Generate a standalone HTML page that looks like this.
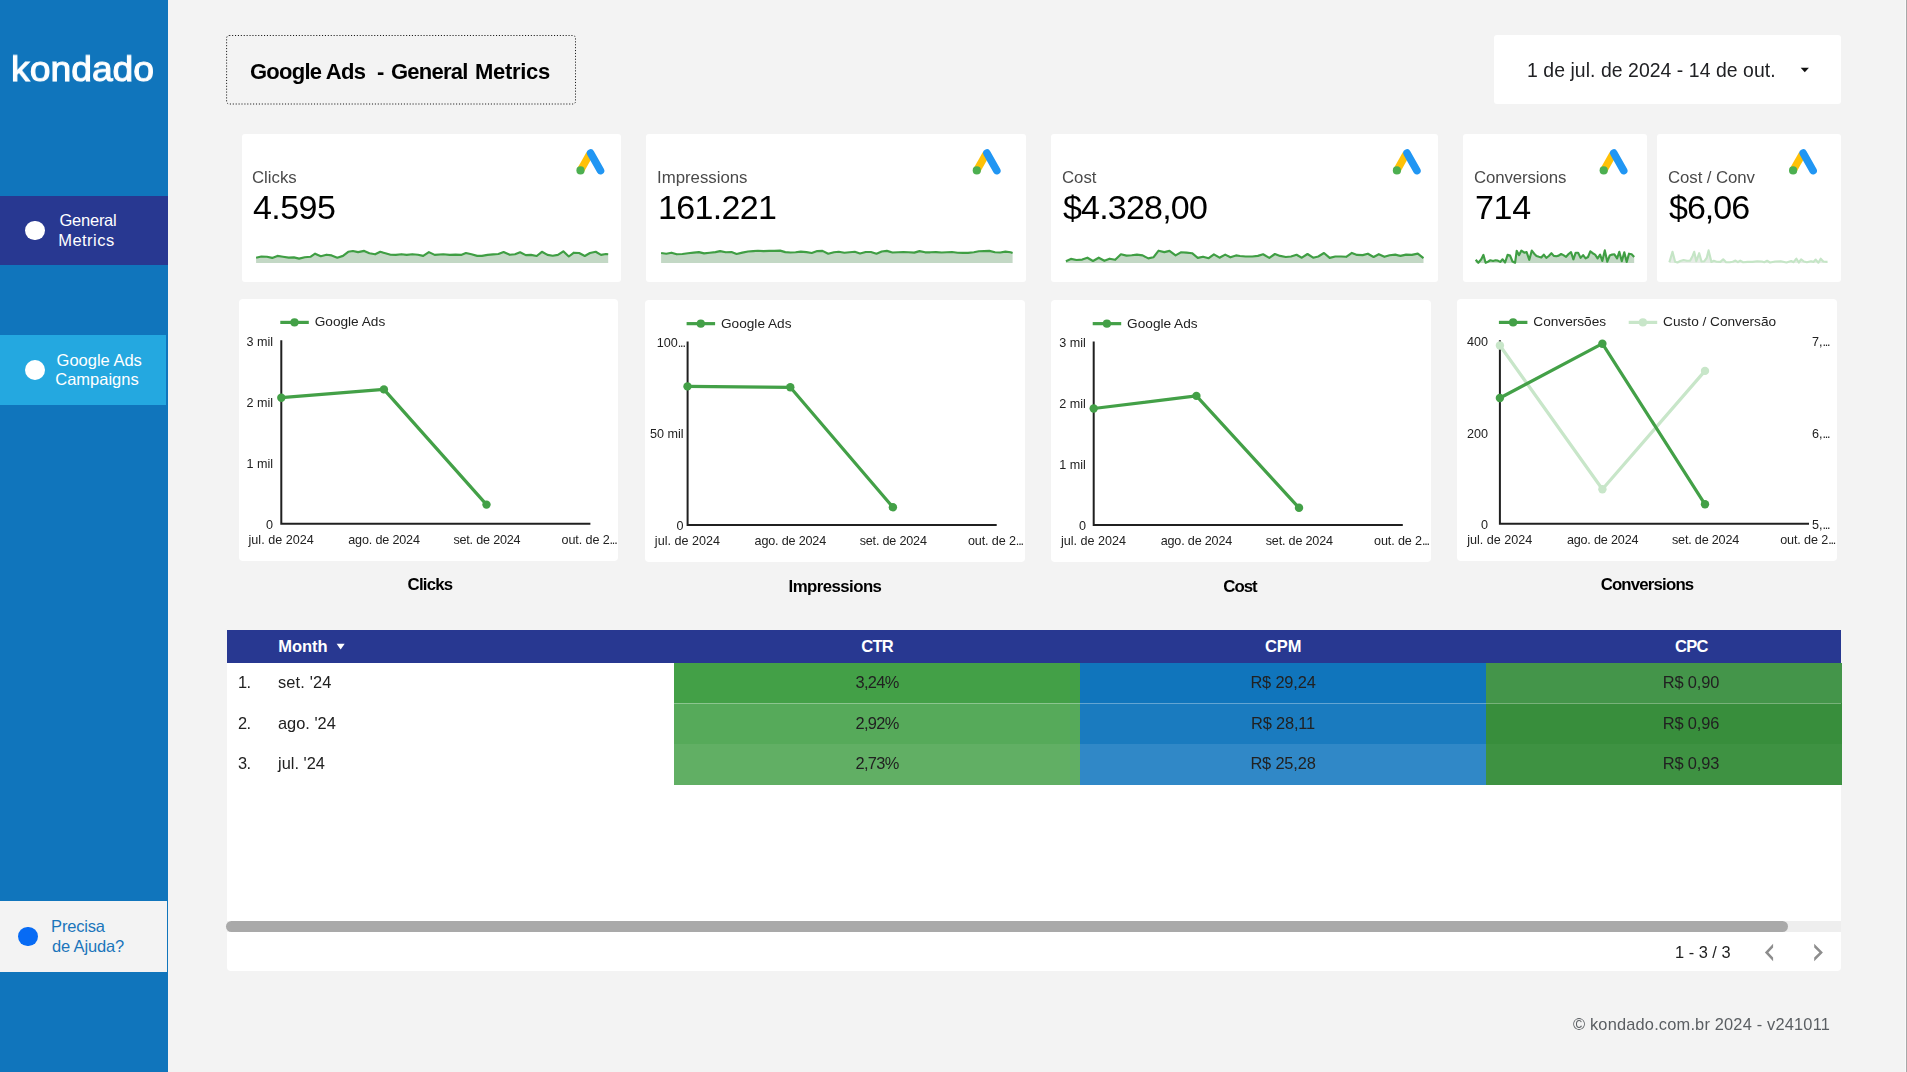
<!DOCTYPE html>
<html lang="pt-BR">
<head>
<meta charset="utf-8">
<title>Google Ads - General Metrics</title>
<style>
*{box-sizing:border-box;margin:0;padding:0}
html,body{width:1907px;height:1072px;overflow:hidden;background:#f3f3f3;font-family:"Liberation Sans",sans-serif;color:#000}
.abs{position:absolute}
.t{position:absolute;white-space:nowrap;line-height:1}
#side{left:0;top:0;width:167.5px;height:1072px;background:#1075bc}
#redge{left:1905px;top:0;width:2px;height:1072px;background:linear-gradient(90deg,#f9f9f9 0,#f9f9f9 50%,#a8a8a8 50%)}
.nav{position:absolute;left:0;width:167.5px}
.dot{position:absolute;border-radius:50%;width:19.8px;height:19.8px}
.card{position:absolute;background:#fff;border-radius:3px}
svg{position:absolute;left:0;top:0;overflow:visible;will-change:transform}
.g{will-change:transform}
svg text{font-family:"Liberation Sans",sans-serif}
.cell{position:absolute}
</style>
</head>
<body>
<aside id="side" class="abs"></aside>
<div id="redge" class="abs"></div>
<div id="logo" class="t g" style="top:50.33px;font-size:37.3px;color:#fff;left:10.80px;-webkit-text-stroke:1.1px #fff;transform:scaleY(.95);transform-origin:0 84.65%;">kondado</div>
<nav>
<div class="nav" style="top:195.8px;height:69.4px;background:#283891"></div>
<div class="dot" style="left:25px;top:220.5px;background:#fff"></div>
<div id="nav1a" class="t" style="top:211.63px;font-size:16.5px;color:#fff;letter-spacing:-0.250px;left:-112.00px;width:400px;text-align:center;">General</div>
<div id="nav1b" class="t" style="top:231.63px;font-size:16.5px;color:#fff;letter-spacing:0.470px;left:-113.60px;width:400px;text-align:center;">Metrics</div>
<div class="nav" style="top:335px;height:69.6px;width:166.3px;background:#24a8e0"></div>
<div class="dot" style="left:25px;top:359.9px;background:#fff"></div>
<div id="nav2a" class="t" style="top:351.63px;font-size:16.5px;color:#fff;left:-100.80px;width:400px;text-align:center;">Google Ads</div>
<div id="nav2b" class="t" style="top:370.93px;font-size:16.5px;color:#fff;left:-103.00px;width:400px;text-align:center;">Campaigns</div>
<div class="nav" style="top:901.3px;height:70.4px;width:167.4px;background:#f3f3f3"></div>
<div class="dot" style="left:18px;top:926.6px;background:#076bf4"></div>
<div id="nav3a" class="t" style="top:917.73px;font-size:16.5px;color:#1a75bb;letter-spacing:-0.200px;left:51.10px;">Precisa</div>
<div id="nav3b" class="t" style="top:937.63px;font-size:16.5px;color:#1a75bb;letter-spacing:-0.130px;left:51.90px;">de Ajuda?</div>
</nav>
<main>
<div role="heading" aria-level="1">
<div id="ttl1" class="t g" style="top:61.38px;font-size:22px;color:#000;font-weight:bold;letter-spacing:-0.750px;left:250.40px;">Google Ads</div>
<div id="ttl2" class="t g" style="top:61.38px;font-size:22px;color:#000;font-weight:bold;left:377.20px;">-</div>
<div id="ttl3" class="t g" style="top:61.38px;font-size:22px;color:#000;font-weight:bold;letter-spacing:-0.760px;left:391.20px;">General</div>
<div id="ttl4" class="t g" style="top:61.38px;font-size:22px;color:#000;font-weight:bold;letter-spacing:-0.300px;left:474.60px;">Metrics</div>
</div>
<div class="card" style="left:1493.5px;top:35.1px;width:347.4px;height:69.3px"></div>
<div id="date" class="t g" style="top:61.38px;font-size:19.4px;color:#202124;letter-spacing:0.060px;left:1527.00px;">1 de jul. de 2024 - 14 de out.</div>
<section class="card" style="left:241.5px;top:134px;width:379.5px;height:147.8px"></section>
<div id="c1l" class="t g" style="top:169.78px;font-size:16.8px;color:#4a4a4a;left:252.40px;">Clicks</div>
<div id="c1v" class="t g" style="top:189.92px;font-size:34px;color:#000;letter-spacing:-0.550px;left:253.10px;">4.595</div>
<section class="card" style="left:646.4px;top:134px;width:379.5px;height:147.8px"></section>
<div id="c2l" class="t g" style="top:169.78px;font-size:16.8px;color:#4a4a4a;left:657.20px;">Impressions</div>
<div id="c2v" class="t g" style="top:189.92px;font-size:34px;color:#000;letter-spacing:-0.650px;left:657.70px;">161.221</div>
<section class="card" style="left:1051.0px;top:134px;width:386.8px;height:147.8px"></section>
<div id="c3l" class="t g" style="top:169.78px;font-size:16.8px;color:#4a4a4a;left:1062.20px;">Cost</div>
<div id="c3v" class="t g" style="top:189.92px;font-size:34px;color:#000;letter-spacing:-0.800px;left:1063.20px;">$4.328,00</div>
<section class="card" style="left:1463.0px;top:134px;width:183.8px;height:147.8px"></section>
<div id="c4l" class="t g" style="top:169.78px;font-size:16.8px;color:#4a4a4a;letter-spacing:-0.100px;left:1473.50px;">Conversions</div>
<div id="c4v" class="t g" style="top:189.92px;font-size:34px;color:#000;letter-spacing:-0.300px;left:1474.60px;">714</div>
<section class="card" style="left:1656.8px;top:134px;width:184.1px;height:147.8px"></section>
<div id="c5l" class="t g" style="top:169.78px;font-size:16.8px;color:#4a4a4a;letter-spacing:-0.070px;left:1667.50px;">Cost / Conv</div>
<div id="c5v" class="t g" style="top:189.92px;font-size:34px;color:#000;letter-spacing:-1.000px;left:1668.60px;">$6,06</div>
<section class="card" style="left:238.5px;top:299.0px;width:379.6px;height:262.2px;border-radius:4px"></section>
<section class="card" style="left:645.0px;top:299.8px;width:379.6px;height:262.2px;border-radius:4px"></section>
<section class="card" style="left:1051.0px;top:299.8px;width:379.6px;height:262.2px;border-radius:4px"></section>
<section class="card" style="left:1457.3px;top:299.0px;width:379.4px;height:262.2px;border-radius:4px"></section>
<div id="gt1" class="t g" style="top:576.68px;font-size:16.8px;color:#000;font-weight:bold;letter-spacing:-0.780px;left:230.30px;width:400px;text-align:center;">Clicks</div>
<div id="gt2" class="t g" style="top:578.68px;font-size:16.8px;color:#000;font-weight:bold;letter-spacing:-0.550px;left:634.80px;width:400px;text-align:center;">Impressions</div>
<div id="gt3" class="t g" style="top:578.68px;font-size:16.8px;color:#000;font-weight:bold;letter-spacing:-0.970px;left:1040.00px;width:400px;text-align:center;">Cost</div>
<div id="gt4" class="t g" style="top:576.68px;font-size:16.8px;color:#000;font-weight:bold;letter-spacing:-0.810px;left:1447.20px;width:400px;text-align:center;">Conversions</div>
<section class="card" style="left:226.5px;top:630px;width:1614.5px;height:341px;border-radius:0 0 4px 4px"></section>
<div class="abs" style="left:226.5px;top:630px;width:1614.5px;height:32.8px;background:#283891"></div>
<div id="thm" class="t" style="top:637.83px;font-size:16.5px;color:#fff;font-weight:bold;left:278.20px;">Month</div>
<div id="th1" class="t" style="top:637.83px;font-size:16.5px;color:#fff;font-weight:bold;letter-spacing:-0.700px;left:677.10px;width:400px;text-align:center;">CTR</div>
<div id="th2" class="t" style="top:637.83px;font-size:16.5px;color:#fff;font-weight:bold;left:1083.30px;width:400px;text-align:center;">CPM</div>
<div id="th3" class="t" style="top:637.83px;font-size:16.5px;color:#fff;font-weight:bold;letter-spacing:-0.700px;left:1491.30px;width:400px;text-align:center;">CPC</div>
<div class="cell" style="left:674.0px;top:662.6px;width:406.3px;height:41.4px;background:#43a047"></div>
<div class="cell" style="left:1080.3px;top:662.6px;width:405.7px;height:41.4px;background:#1075bc"></div>
<div class="cell" style="left:1486.0px;top:662.6px;width:355.9px;height:41.4px;background:#44954a"></div>
<div id="r0n" class="t g" style="top:673.92px;font-size:16.4px;color:#212121;letter-spacing:-0.500px;left:238.00px;">1.</div>
<div id="r0m" class="t g" style="top:673.92px;font-size:16.4px;color:#212121;letter-spacing:0.150px;left:278.20px;">set. '24</div>
<div id="r0a" class="t g" style="top:673.92px;font-size:16.4px;color:#212121;letter-spacing:-0.680px;left:677.10px;width:400px;text-align:center;">3,24%</div>
<div id="r0b" class="t g" style="top:673.92px;font-size:16.4px;color:#212121;letter-spacing:-0.160px;left:1083.30px;width:400px;text-align:center;">R$ 29,24</div>
<div id="r0c" class="t g" style="top:673.92px;font-size:16.4px;color:#212121;letter-spacing:-0.130px;left:1491.30px;width:400px;text-align:center;">R$ 0,90</div>
<div class="cell" style="left:674.0px;top:703.4px;width:406.3px;height:41.2px;background:#56aa5a"></div>
<div class="cell" style="left:1080.3px;top:703.4px;width:405.7px;height:41.2px;background:#1a7bbf"></div>
<div class="cell" style="left:1486.0px;top:703.4px;width:355.9px;height:41.2px;background:#388e3c"></div>
<div id="r1n" class="t g" style="top:715.02px;font-size:16.4px;color:#212121;letter-spacing:-0.500px;left:238.00px;">2.</div>
<div id="r1m" class="t g" style="top:715.02px;font-size:16.4px;color:#212121;left:278.20px;">ago. '24</div>
<div id="r1a" class="t g" style="top:715.02px;font-size:16.4px;color:#212121;letter-spacing:-0.680px;left:677.10px;width:400px;text-align:center;">2,92%</div>
<div id="r1b" class="t g" style="top:715.02px;font-size:16.4px;color:#212121;letter-spacing:-0.160px;left:1083.30px;width:400px;text-align:center;">R$ 28,11</div>
<div id="r1c" class="t g" style="top:715.02px;font-size:16.4px;color:#212121;letter-spacing:-0.130px;left:1491.30px;width:400px;text-align:center;">R$ 0,96</div>
<div class="cell" style="left:674.0px;top:744.0px;width:406.3px;height:40.7px;background:#61af64"></div>
<div class="cell" style="left:1080.3px;top:744.0px;width:405.7px;height:40.7px;background:#3088c7"></div>
<div class="cell" style="left:1486.0px;top:744.0px;width:355.9px;height:40.7px;background:#3e9242"></div>
<div id="r2n" class="t g" style="top:754.92px;font-size:16.4px;color:#212121;letter-spacing:-0.500px;left:238.00px;">3.</div>
<div id="r2m" class="t g" style="top:754.92px;font-size:16.4px;color:#212121;left:278.20px;">jul. '24</div>
<div id="r2a" class="t g" style="top:754.92px;font-size:16.4px;color:#212121;letter-spacing:-0.680px;left:677.10px;width:400px;text-align:center;">2,73%</div>
<div id="r2b" class="t g" style="top:754.92px;font-size:16.4px;color:#212121;letter-spacing:-0.160px;left:1083.30px;width:400px;text-align:center;">R$ 25,28</div>
<div id="r2c" class="t g" style="top:754.92px;font-size:16.4px;color:#212121;letter-spacing:-0.130px;left:1491.30px;width:400px;text-align:center;">R$ 0,93</div>
<div class="abs" style="left:674px;top:702.8px;width:1167px;height:1px;background:rgba(255,255,255,.32)"></div>
<div class="abs" style="left:226.5px;top:921.2px;width:1614.5px;height:11.2px;background:#eee"></div>
<div class="abs" style="left:226.2px;top:921.2px;width:1561.8px;height:11.2px;background:#a9a9a9;border-radius:5.6px"></div>
<div id="pg" class="t g" style="top:944.12px;font-size:16.4px;color:#212121;left:1674.60px;">1 - 3 / 3</div>
<div id="foot" class="t g" style="top:1016.32px;font-size:16.4px;color:#5a5e62;letter-spacing:0.180px;left:1573.20px;">© kondado.com.br 2024 - v241011</div>
</main>
<svg width="1907" height="1072" viewBox="0 0 1907 1072">
<rect x="226.6" y="35.5" width="348.9" height="68.5" rx="2.6" fill="none" stroke="#1a1a1a" stroke-width="1" stroke-dasharray="1.1 1.8"/>
<path d="M1800.7 67.8 L1808.9 67.8 L1804.8 72.2Z" fill="#111"/>
<path d="M336.6 643.8 L344.7 643.8 L340.65 649.4Z" fill="#fff"/>
<path d="M1773.1 943.7 L1764.9 952.45 L1773.1 961.2 L1773.1 957.5 L1768.4 952.45 L1773.1 947.4Z" fill="#8d8d8d"/>
<path d="M1814.2 943.7 L1822.9 952.45 L1814.2 961.2 L1814.2 957.5 L1819.4 952.45 L1814.2 947.4Z" fill="#8d8d8d"/>
<g transform="translate(0.0 0)"><path d="M580.5 170.4 L589.7 154.2" stroke="#ffc107" stroke-width="7.5" fill="none"/><path d="M590.6 153.1 L600.5 170.6" stroke="#2196f3" stroke-width="7.6" stroke-linecap="round" fill="none"/><circle cx="580.5" cy="170.4" r="4.1" fill="#4caf50"/></g>
<g transform="translate(396.3 0)"><path d="M580.5 170.4 L589.7 154.2" stroke="#ffc107" stroke-width="7.5" fill="none"/><path d="M590.6 153.1 L600.5 170.6" stroke="#2196f3" stroke-width="7.6" stroke-linecap="round" fill="none"/><circle cx="580.5" cy="170.4" r="4.1" fill="#4caf50"/></g>
<g transform="translate(816.4 0)"><path d="M580.5 170.4 L589.7 154.2" stroke="#ffc107" stroke-width="7.5" fill="none"/><path d="M590.6 153.1 L600.5 170.6" stroke="#2196f3" stroke-width="7.6" stroke-linecap="round" fill="none"/><circle cx="580.5" cy="170.4" r="4.1" fill="#4caf50"/></g>
<g transform="translate(1023.2 0)"><path d="M580.5 170.4 L589.7 154.2" stroke="#ffc107" stroke-width="7.5" fill="none"/><path d="M590.6 153.1 L600.5 170.6" stroke="#2196f3" stroke-width="7.6" stroke-linecap="round" fill="none"/><circle cx="580.5" cy="170.4" r="4.1" fill="#4caf50"/></g>
<g transform="translate(1212.6 0)"><path d="M580.5 170.4 L589.7 154.2" stroke="#ffc107" stroke-width="7.5" fill="none"/><path d="M590.6 153.1 L600.5 170.6" stroke="#2196f3" stroke-width="7.6" stroke-linecap="round" fill="none"/><circle cx="580.5" cy="170.4" r="4.1" fill="#4caf50"/></g>
<path d="M256.1 257.7 L261.3 256.5 L267.0 256.8 L272.2 257.9 L277.4 255.9 L283.0 256.7 L288.7 257.6 L293.9 257.4 L299.1 258.6 L304.7 257.2 L310.4 256.8 L315.1 253.7 L320.8 256.2 L326.5 254.7 L331.6 255.4 L337.3 257.7 L343.0 255.9 L348.2 251.8 L352.9 251.0 L358.1 252.1 L364.2 250.9 L369.4 253.2 L375.1 254.3 L380.3 251.8 L385.4 253.2 L390.6 254.7 L395.8 254.9 L401.5 254.2 L406.7 254.9 L412.3 254.2 L418.0 254.7 L423.2 255.9 L428.9 252.1 L434.7 254.9 L443.2 254.3 L449.8 254.9 L455.5 254.6 L461.1 254.9 L465.9 253.0 L471.5 254.3 L477.2 255.9 L481.9 255.9 L487.6 254.9 L493.2 254.4 L498.4 254.0 L503.6 252.1 L509.8 254.8 L515.0 254.3 L520.1 252.3 L525.8 255.1 L531.0 254.9 L536.7 256.0 L541.9 251.8 L547.5 254.9 L552.7 255.7 L557.9 254.9 L563.3 251.3 L568.8 256.5 L573.9 252.7 L579.1 253.0 L584.8 256.0 L590.0 253.0 L595.7 251.8 L601.0 254.9 L606.0 254.0 L608.2 254.2 L608.2 262.9 L256.1 262.9 Z" fill="#c3d8c5"/><path d="M256.1 257.7 L261.3 256.5 L267.0 256.8 L272.2 257.9 L277.4 255.9 L283.0 256.7 L288.7 257.6 L293.9 257.4 L299.1 258.6 L304.7 257.2 L310.4 256.8 L315.1 253.7 L320.8 256.2 L326.5 254.7 L331.6 255.4 L337.3 257.7 L343.0 255.9 L348.2 251.8 L352.9 251.0 L358.1 252.1 L364.2 250.9 L369.4 253.2 L375.1 254.3 L380.3 251.8 L385.4 253.2 L390.6 254.7 L395.8 254.9 L401.5 254.2 L406.7 254.9 L412.3 254.2 L418.0 254.7 L423.2 255.9 L428.9 252.1 L434.7 254.9 L443.2 254.3 L449.8 254.9 L455.5 254.6 L461.1 254.9 L465.9 253.0 L471.5 254.3 L477.2 255.9 L481.9 255.9 L487.6 254.9 L493.2 254.4 L498.4 254.0 L503.6 252.1 L509.8 254.8 L515.0 254.3 L520.1 252.3 L525.8 255.1 L531.0 254.9 L536.7 256.0 L541.9 251.8 L547.5 254.9 L552.7 255.7 L557.9 254.9 L563.3 251.3 L568.8 256.5 L573.9 252.7 L579.1 253.0 L584.8 256.0 L590.0 253.0 L595.7 251.8 L601.0 254.9 L606.0 254.0 L608.2 254.2" fill="none" stroke="#3f9e43" stroke-width="2.15" stroke-linejoin="round"/>
<path d="M661.1 253.0 L666.3 253.7 L671.5 252.7 L676.7 254.3 L682.4 254.0 L688.0 253.2 L693.7 252.6 L698.9 252.1 L704.1 253.4 L709.7 252.7 L715.4 252.1 L720.1 251.1 L725.8 252.3 L731.5 252.1 L736.6 254.0 L742.3 252.6 L748.0 251.5 L753.2 251.1 L757.9 250.7 L763.5 251.1 L769.2 250.9 L774.4 250.9 L780.1 250.6 L785.3 252.1 L790.4 252.5 L795.6 252.3 L800.8 251.6 L806.5 252.1 L811.7 253.0 L817.3 251.1 L822.5 250.9 L828.2 253.7 L833.9 252.3 L838.8 251.8 L844.4 252.7 L849.6 252.3 L854.8 251.8 L860.0 253.5 L865.7 252.0 L870.9 252.0 L876.5 253.7 L881.7 251.5 L886.9 250.9 L892.6 252.5 L898.2 252.3 L903.4 252.0 L908.6 252.3 L914.3 252.6 L919.5 251.1 L925.1 252.3 L930.3 252.3 L936.0 252.1 L941.7 252.5 L946.9 252.3 L952.0 252.0 L957.7 252.7 L962.9 252.9 L968.1 252.9 L973.8 252.3 L978.9 251.3 L984.1 251.1 L989.3 250.9 L995.0 252.3 L1000.2 252.5 L1005.4 251.6 L1010.6 252.3 L1012.6 253.0 L1012.6 262.9 L661.1 262.9 Z" fill="#c3d8c5"/><path d="M661.1 253.0 L666.3 253.7 L671.5 252.7 L676.7 254.3 L682.4 254.0 L688.0 253.2 L693.7 252.6 L698.9 252.1 L704.1 253.4 L709.7 252.7 L715.4 252.1 L720.1 251.1 L725.8 252.3 L731.5 252.1 L736.6 254.0 L742.3 252.6 L748.0 251.5 L753.2 251.1 L757.9 250.7 L763.5 251.1 L769.2 250.9 L774.4 250.9 L780.1 250.6 L785.3 252.1 L790.4 252.5 L795.6 252.3 L800.8 251.6 L806.5 252.1 L811.7 253.0 L817.3 251.1 L822.5 250.9 L828.2 253.7 L833.9 252.3 L838.8 251.8 L844.4 252.7 L849.6 252.3 L854.8 251.8 L860.0 253.5 L865.7 252.0 L870.9 252.0 L876.5 253.7 L881.7 251.5 L886.9 250.9 L892.6 252.5 L898.2 252.3 L903.4 252.0 L908.6 252.3 L914.3 252.6 L919.5 251.1 L925.1 252.3 L930.3 252.3 L936.0 252.1 L941.7 252.5 L946.9 252.3 L952.0 252.0 L957.7 252.7 L962.9 252.9 L968.1 252.9 L973.8 252.3 L978.9 251.3 L984.1 251.1 L989.3 250.9 L995.0 252.3 L1000.2 252.5 L1005.4 251.6 L1010.6 252.3 L1012.6 253.0" fill="none" stroke="#3f9e43" stroke-width="2.15" stroke-linejoin="round"/>
<path d="M1065.9 261.2 L1070.9 258.9 L1076.5 260.0 L1082.2 259.6 L1087.4 257.7 L1093.0 261.0 L1098.7 257.7 L1104.4 260.8 L1109.6 258.7 L1115.2 259.8 L1120.9 254.3 L1126.5 255.6 L1131.7 255.3 L1136.9 254.6 L1142.6 255.4 L1148.3 258.4 L1153.4 257.3 L1158.6 250.7 L1164.3 252.1 L1169.5 250.9 L1175.6 255.4 L1180.8 252.3 L1186.5 252.6 L1192.1 253.2 L1197.8 257.9 L1203.0 256.7 L1208.7 258.2 L1213.9 254.3 L1219.5 257.7 L1225.2 254.6 L1230.4 257.3 L1236.0 255.4 L1240.0 256.0 L1245.7 256.5 L1252.3 256.5 L1257.9 255.9 L1263.1 254.3 L1269.3 257.9 L1274.9 254.0 L1280.1 255.9 L1285.8 257.0 L1291.0 256.5 L1296.6 254.8 L1301.8 257.7 L1307.5 254.0 L1313.2 257.7 L1318.3 256.5 L1324.0 253.0 L1329.7 257.9 L1335.3 256.5 L1341.0 256.5 L1346.2 256.8 L1351.9 252.9 L1357.0 254.9 L1362.7 255.1 L1367.9 253.7 L1373.6 257.0 L1378.8 254.2 L1384.4 256.8 L1389.6 255.3 L1395.3 254.6 L1400.5 255.9 L1406.1 254.6 L1411.8 254.9 L1417.8 253.6 L1423.5 258.1 L1423.5 262.9 L1065.9 262.9 Z" fill="#c3d8c5"/><path d="M1065.9 261.2 L1070.9 258.9 L1076.5 260.0 L1082.2 259.6 L1087.4 257.7 L1093.0 261.0 L1098.7 257.7 L1104.4 260.8 L1109.6 258.7 L1115.2 259.8 L1120.9 254.3 L1126.5 255.6 L1131.7 255.3 L1136.9 254.6 L1142.6 255.4 L1148.3 258.4 L1153.4 257.3 L1158.6 250.7 L1164.3 252.1 L1169.5 250.9 L1175.6 255.4 L1180.8 252.3 L1186.5 252.6 L1192.1 253.2 L1197.8 257.9 L1203.0 256.7 L1208.7 258.2 L1213.9 254.3 L1219.5 257.7 L1225.2 254.6 L1230.4 257.3 L1236.0 255.4 L1240.0 256.0 L1245.7 256.5 L1252.3 256.5 L1257.9 255.9 L1263.1 254.3 L1269.3 257.9 L1274.9 254.0 L1280.1 255.9 L1285.8 257.0 L1291.0 256.5 L1296.6 254.8 L1301.8 257.7 L1307.5 254.0 L1313.2 257.7 L1318.3 256.5 L1324.0 253.0 L1329.7 257.9 L1335.3 256.5 L1341.0 256.5 L1346.2 256.8 L1351.9 252.9 L1357.0 254.9 L1362.7 255.1 L1367.9 253.7 L1373.6 257.0 L1378.8 254.2 L1384.4 256.8 L1389.6 255.3 L1395.3 254.6 L1400.5 255.9 L1406.1 254.6 L1411.8 254.9 L1417.8 253.6 L1423.5 258.1" fill="none" stroke="#3f9e43" stroke-width="2.15" stroke-linejoin="round"/>
<path d="M1475.7 259.8 L1478.3 262.8 L1481.3 259.3 L1483.4 254.9 L1485.6 262.8 L1487.9 261.7 L1490.3 260.3 L1493.1 261.0 L1495.5 260.3 L1497.8 260.6 L1500.2 261.9 L1502.6 259.3 L1505.1 262.5 L1507.6 254.9 L1510.1 255.6 L1512.5 261.5 L1515.1 262.7 L1516.7 250.9 L1519.1 255.1 L1521.4 250.6 L1524.3 252.7 L1526.6 252.1 L1529.3 259.8 L1531.8 250.6 L1534.2 253.7 L1536.5 256.0 L1538.9 256.8 L1541.3 257.5 L1543.8 254.6 L1546.3 257.9 L1548.8 256.0 L1551.4 253.2 L1553.8 255.9 L1556.4 256.2 L1558.7 255.6 L1561.1 254.0 L1563.4 255.1 L1566.1 256.8 L1568.6 254.0 L1571.0 252.1 L1573.4 259.3 L1575.7 252.7 L1578.1 252.7 L1580.6 257.9 L1583.1 255.1 L1585.6 258.4 L1588.0 257.0 L1590.3 251.3 L1592.7 253.2 L1595.1 254.6 L1597.6 258.4 L1600.1 254.6 L1602.3 261.0 L1604.8 250.4 L1607.3 261.7 L1609.7 255.6 L1612.1 254.6 L1614.4 254.3 L1617.1 258.4 L1619.3 251.8 L1621.8 261.2 L1624.3 252.3 L1626.7 261.9 L1629.0 253.7 L1631.6 254.3 L1634.2 257.0 L1634.2 262.9 L1475.7 262.9 Z" fill="#c3d8c5"/><path d="M1475.7 259.8 L1478.3 262.8 L1481.3 259.3 L1483.4 254.9 L1485.6 262.8 L1487.9 261.7 L1490.3 260.3 L1493.1 261.0 L1495.5 260.3 L1497.8 260.6 L1500.2 261.9 L1502.6 259.3 L1505.1 262.5 L1507.6 254.9 L1510.1 255.6 L1512.5 261.5 L1515.1 262.7 L1516.7 250.9 L1519.1 255.1 L1521.4 250.6 L1524.3 252.7 L1526.6 252.1 L1529.3 259.8 L1531.8 250.6 L1534.2 253.7 L1536.5 256.0 L1538.9 256.8 L1541.3 257.5 L1543.8 254.6 L1546.3 257.9 L1548.8 256.0 L1551.4 253.2 L1553.8 255.9 L1556.4 256.2 L1558.7 255.6 L1561.1 254.0 L1563.4 255.1 L1566.1 256.8 L1568.6 254.0 L1571.0 252.1 L1573.4 259.3 L1575.7 252.7 L1578.1 252.7 L1580.6 257.9 L1583.1 255.1 L1585.6 258.4 L1588.0 257.0 L1590.3 251.3 L1592.7 253.2 L1595.1 254.6 L1597.6 258.4 L1600.1 254.6 L1602.3 261.0 L1604.8 250.4 L1607.3 261.7 L1609.7 255.6 L1612.1 254.6 L1614.4 254.3 L1617.1 258.4 L1619.3 251.8 L1621.8 261.2 L1624.3 252.3 L1626.7 261.9 L1629.0 253.7 L1631.6 254.3 L1634.2 257.0" fill="none" stroke="#3f9e43" stroke-width="2.15" stroke-linejoin="round"/>
<path d="M1669.4 262.2 L1672.5 251.8 L1675.1 261.7 L1677.5 262.5 L1680.3 261.0 L1683.6 260.0 L1686.9 260.8 L1690.2 260.6 L1692.6 256.0 L1694.2 251.8 L1696.3 261.2 L1699.2 253.2 L1701.5 261.5 L1704.4 261.2 L1706.7 257.9 L1708.6 250.4 L1711.4 261.9 L1713.8 260.8 L1716.6 261.7 L1720.4 261.9 L1723.2 259.3 L1726.1 262.2 L1729.8 262.2 L1732.7 261.7 L1735.5 260.6 L1737.9 262.2 L1740.2 260.6 L1743.1 262.2 L1747.8 261.9 L1752.5 261.9 L1757.2 261.2 L1761.9 261.5 L1764.3 262.2 L1767.1 260.8 L1770.0 262.5 L1775.2 261.5 L1780.8 261.2 L1786.5 262.5 L1791.2 261.0 L1793.6 262.2 L1796.4 258.7 L1798.8 262.5 L1801.1 259.3 L1803.9 261.5 L1806.8 262.2 L1811.0 261.2 L1813.4 261.9 L1815.7 259.6 L1818.4 262.7 L1820.7 258.7 L1823.3 261.5 L1827.5 261.9 L1827.5 262.9 L1669.4 262.9 Z" fill="#e6ece6"/><path d="M1669.4 262.2 L1672.5 251.8 L1675.1 261.7 L1677.5 262.5 L1680.3 261.0 L1683.6 260.0 L1686.9 260.8 L1690.2 260.6 L1692.6 256.0 L1694.2 251.8 L1696.3 261.2 L1699.2 253.2 L1701.5 261.5 L1704.4 261.2 L1706.7 257.9 L1708.6 250.4 L1711.4 261.9 L1713.8 260.8 L1716.6 261.7 L1720.4 261.9 L1723.2 259.3 L1726.1 262.2 L1729.8 262.2 L1732.7 261.7 L1735.5 260.6 L1737.9 262.2 L1740.2 260.6 L1743.1 262.2 L1747.8 261.9 L1752.5 261.9 L1757.2 261.2 L1761.9 261.5 L1764.3 262.2 L1767.1 260.8 L1770.0 262.5 L1775.2 261.5 L1780.8 261.2 L1786.5 262.5 L1791.2 261.0 L1793.6 262.2 L1796.4 258.7 L1798.8 262.5 L1801.1 259.3 L1803.9 261.5 L1806.8 262.2 L1811.0 261.2 L1813.4 261.9 L1815.7 259.6 L1818.4 262.7 L1820.7 258.7 L1823.3 261.5 L1827.5 261.9" fill="none" stroke="#c5e5c6" stroke-width="2.15" stroke-linejoin="round"/>
<path d="M281.30 340.20 V524.85 M280.30 523.85 H590.40" stroke="#202020" stroke-width="2" fill="none"/>
<text id="g1y0" x="273.10" y="529.00" font-size="12.6" fill="#222" text-anchor="end">0</text>
<text id="g1y1" x="273.10" y="468.00" font-size="12.6" fill="#222" text-anchor="end">1 mil</text>
<text id="g1y2" x="273.10" y="407.10" font-size="12.6" fill="#222" text-anchor="end">2 mil</text>
<text id="g1y3" x="273.10" y="346.10" font-size="12.6" fill="#222" text-anchor="end">3 mil</text>
<text id="g1x0" x="281.10" y="543.70" font-size="12.6" fill="#222" text-anchor="middle">jul. de 2024</text>
<text id="g1x1" x="384.00" y="543.70" font-size="12.6" fill="#222" text-anchor="middle" letter-spacing="-0.175">ago. de 2024</text>
<text id="g1x2" x="486.90" y="543.70" font-size="12.6" fill="#222" text-anchor="middle" letter-spacing="-0.190">set. de 2024</text>
<text id="g1x3" x="561.60" y="543.70" font-size="12.6" fill="#222" letter-spacing="-0.120">out. de 2<tspan letter-spacing="-1.2">...</tspan></text>
<path d="M280.30 322.40 h28.5" stroke="#43a047" stroke-width="3.2"/><circle cx="294.50" cy="322.40" r="4.1" fill="#43a047"/>
<text id="g1l0" x="314.70" y="325.90" font-size="13.65" fill="#222">Google Ads</text>
<polyline points="281.3,397.7 383.9,389.4 486.5,504.6" fill="none" stroke="#43a047" stroke-width="3.2" stroke-linejoin="round"/>
<circle cx="281.3" cy="397.7" r="4.2" fill="#43a047"/><circle cx="383.9" cy="389.4" r="4.2" fill="#43a047"/><circle cx="486.5" cy="504.6" r="4.2" fill="#43a047"/>
<path d="M687.60 341.45 V526.10 M686.60 525.10 H996.70" stroke="#202020" stroke-width="2" fill="none"/>
<text id="g2y0" x="683.50" y="529.60" font-size="12.6" fill="#222" text-anchor="end">0</text>
<text id="g2y1" x="683.50" y="438.15" font-size="12.6" fill="#222" text-anchor="end">50 mil</text>
<text id="g2y2" x="684.70" y="346.70" font-size="12.6" fill="#222" text-anchor="end">100<tspan letter-spacing="-1.2">...</tspan></text>
<text id="g2x0" x="687.40" y="544.95" font-size="12.6" fill="#222" text-anchor="middle">jul. de 2024</text>
<text id="g2x1" x="790.30" y="544.95" font-size="12.6" fill="#222" text-anchor="middle" letter-spacing="-0.175">ago. de 2024</text>
<text id="g2x2" x="893.20" y="544.95" font-size="12.6" fill="#222" text-anchor="middle" letter-spacing="-0.190">set. de 2024</text>
<text id="g2x3" x="967.90" y="544.95" font-size="12.6" fill="#222" letter-spacing="-0.120">out. de 2<tspan letter-spacing="-1.2">...</tspan></text>
<path d="M686.60 323.65 h28.5" stroke="#43a047" stroke-width="3.2"/><circle cx="700.80" cy="323.65" r="4.1" fill="#43a047"/>
<text id="g2l0" x="721.00" y="328.00" font-size="13.65" fill="#222">Google Ads</text>
<polyline points="687.5,386.4 790.3,387.3 892.9,507.2" fill="none" stroke="#43a047" stroke-width="3.2" stroke-linejoin="round"/>
<circle cx="687.5" cy="386.4" r="4.2" fill="#43a047"/><circle cx="790.3" cy="387.3" r="4.2" fill="#43a047"/><circle cx="892.9" cy="507.2" r="4.2" fill="#43a047"/>
<path d="M1093.70 341.45 V526.10 M1092.70 525.10 H1402.80" stroke="#202020" stroke-width="2" fill="none"/>
<text id="g3y0" x="1085.90" y="529.60" font-size="12.6" fill="#222" text-anchor="end">0</text>
<text id="g3y1" x="1085.90" y="468.60" font-size="12.6" fill="#222" text-anchor="end">1 mil</text>
<text id="g3y2" x="1085.90" y="407.70" font-size="12.6" fill="#222" text-anchor="end">2 mil</text>
<text id="g3y3" x="1085.90" y="346.70" font-size="12.6" fill="#222" text-anchor="end">3 mil</text>
<text id="g3x0" x="1093.50" y="544.95" font-size="12.6" fill="#222" text-anchor="middle">jul. de 2024</text>
<text id="g3x1" x="1196.40" y="544.95" font-size="12.6" fill="#222" text-anchor="middle" letter-spacing="-0.175">ago. de 2024</text>
<text id="g3x2" x="1299.30" y="544.95" font-size="12.6" fill="#222" text-anchor="middle" letter-spacing="-0.190">set. de 2024</text>
<text id="g3x3" x="1374.00" y="544.95" font-size="12.6" fill="#222" letter-spacing="-0.120">out. de 2<tspan letter-spacing="-1.2">...</tspan></text>
<path d="M1092.70 323.65 h28.5" stroke="#43a047" stroke-width="3.2"/><circle cx="1106.90" cy="323.65" r="4.1" fill="#43a047"/>
<text id="g3l0" x="1127.10" y="328.00" font-size="13.65" fill="#222">Google Ads</text>
<polyline points="1093.7,408.5 1196.4,395.9 1299.0,507.8" fill="none" stroke="#43a047" stroke-width="3.2" stroke-linejoin="round"/>
<circle cx="1093.7" cy="408.5" r="4.2" fill="#43a047"/><circle cx="1196.4" cy="395.9" r="4.2" fill="#43a047"/><circle cx="1299.0" cy="507.8" r="4.2" fill="#43a047"/>
<path d="M1499.90 340.20 V524.85 M1498.90 523.85 H1809.00" stroke="#202020" stroke-width="2" fill="none"/>
<text id="g4y0" x="1488.10" y="529.00" font-size="12.6" fill="#222" text-anchor="end">0</text>
<text id="g4y1" x="1488.10" y="437.55" font-size="12.6" fill="#222" text-anchor="end">200</text>
<text id="g4y2" x="1488.10" y="346.10" font-size="12.6" fill="#222" text-anchor="end">400</text>
<text id="g4r0" x="1811.90" y="529.00" font-size="12.6" fill="#222">5,<tspan letter-spacing="-1.2">...</tspan></text>
<text id="g4r1" x="1811.90" y="437.55" font-size="12.6" fill="#222">6,<tspan letter-spacing="-1.2">...</tspan></text>
<text id="g4r2" x="1811.90" y="346.10" font-size="12.6" fill="#222">7,<tspan letter-spacing="-1.2">...</tspan></text>
<text id="g4x0" x="1499.70" y="543.70" font-size="12.6" fill="#222" text-anchor="middle">jul. de 2024</text>
<text id="g4x1" x="1602.60" y="543.70" font-size="12.6" fill="#222" text-anchor="middle" letter-spacing="-0.175">ago. de 2024</text>
<text id="g4x2" x="1705.50" y="543.70" font-size="12.6" fill="#222" text-anchor="middle" letter-spacing="-0.190">set. de 2024</text>
<text id="g4x3" x="1780.20" y="543.70" font-size="12.6" fill="#222" letter-spacing="-0.120">out. de 2<tspan letter-spacing="-1.2">...</tspan></text>
<path d="M1498.90 322.40 h28.5" stroke="#43a047" stroke-width="3.2"/><circle cx="1513.10" cy="322.40" r="4.1" fill="#43a047"/>
<text id="g4l0" x="1533.30" y="325.90" font-size="13.65" fill="#222">Conversões</text>
<path d="M1628.70 322.40 h28.5" stroke="#c8e6c9" stroke-width="3.2"/><circle cx="1642.90" cy="322.40" r="4.1" fill="#c8e6c9"/>
<text id="g4l1" x="1663.10" y="325.90" font-size="13.65" fill="#222">Custo / Conversão</text>
<polyline points="1499.9,345.5 1602.4,489.3 1705.0,370.9" fill="none" stroke="#c8e6c9" stroke-width="3.2" stroke-linejoin="round"/>
<circle cx="1499.9" cy="345.5" r="4.2" fill="#c8e6c9"/><circle cx="1602.4" cy="489.3" r="4.2" fill="#c8e6c9"/><circle cx="1705.0" cy="370.9" r="4.2" fill="#c8e6c9"/>
<polyline points="1499.9,398.0 1602.4,343.7 1705.0,504.3" fill="none" stroke="#43a047" stroke-width="3.2" stroke-linejoin="round"/>
<circle cx="1499.9" cy="398.0" r="4.2" fill="#43a047"/><circle cx="1602.4" cy="343.7" r="4.2" fill="#43a047"/><circle cx="1705.0" cy="504.3" r="4.2" fill="#43a047"/>
</svg>
</body>
</html>
